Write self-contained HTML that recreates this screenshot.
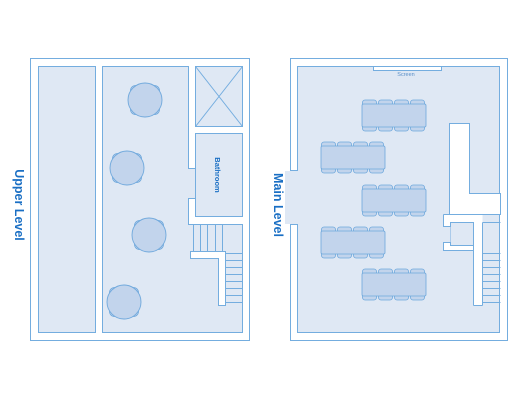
<!DOCTYPE html>
<html><head><meta charset="utf-8"><style>
html,body{margin:0;padding:0;background:#fff;width:520px;height:400px;overflow:hidden}
svg{display:block}
text{font-family:"Liberation Sans",sans-serif}
</style></head><body>
<svg width="520" height="400" viewBox="0 0 520 400" xmlns="http://www.w3.org/2000/svg">
<defs>
<g id="ltab">
  <g fill="#c2d4ec" stroke="#6fa8dc" stroke-width="0.8">
    <rect x="0.5" y="0" width="14" height="8" rx="2.5"/><rect x="16.5" y="0" width="14" height="8" rx="2.5"/><rect x="32.5" y="0" width="14" height="8" rx="2.5"/><rect x="48.5" y="0" width="14" height="8" rx="2.5"/>
    <rect x="0.5" y="23" width="14" height="8" rx="2.5"/><rect x="16.5" y="23" width="14" height="8" rx="2.5"/><rect x="32.5" y="23" width="14" height="8" rx="2.5"/><rect x="48.5" y="23" width="14" height="8" rx="2.5"/>
    <rect x="0" y="4" width="64" height="23" rx="1.5"/>
  </g>
</g>
<g id="rtab">
  <g fill="#c2d4ec" stroke="#6fa8dc" stroke-width="0.8">
    <rect x="-14.5" y="-14.5" width="29" height="29" rx="5"/>
  </g>
  <circle r="17" fill="#c2d4ec" stroke="#6fa8dc" stroke-width="0.9"/>
</g>
</defs>
<g stroke="#74addf" stroke-width="1" fill="#fff">
<!-- Upper level -->
<rect x="30.5" y="58.5" width="219" height="282"/>
<rect x="38.5" y="66.5" width="57" height="266" fill="#dfe8f4"/>
<polygon points="102.5,66.5 188.5,66.5 188.5,168.5 195.5,168.5 195.5,198.5 188.5,198.5 188.5,224.5 242.5,224.5 242.5,332.5 102.5,332.5" fill="#dfe8f4"/>
<rect x="195.5" y="66.5" width="47" height="60" fill="#dfe8f4"/>
<line x1="195.5" y1="66.5" x2="242.5" y2="126.5"/><line x1="242.5" y1="66.5" x2="195.5" y2="126.5"/>
<rect x="195.5" y="133.5" width="47" height="83" fill="#dfe8f4"/>
<polygon points="190.5,251.5 225.5,251.5 225.5,305.5 218.5,305.5 218.5,258.5 190.5,258.5"/>
<g fill="none">
<line x1="193.5" y1="224.5" x2="193.5" y2="251.5"/><line x1="200.5" y1="224.5" x2="200.5" y2="251.5"/><line x1="207.5" y1="224.5" x2="207.5" y2="251.5"/><line x1="215.5" y1="224.5" x2="215.5" y2="251.5"/><line x1="222.5" y1="224.5" x2="222.5" y2="251.5"/>
<line x1="225.5" y1="253.5" x2="242.5" y2="253.5"/><line x1="225.5" y1="260.5" x2="242.5" y2="260.5"/><line x1="225.5" y1="267.5" x2="242.5" y2="267.5"/><line x1="225.5" y1="274.5" x2="242.5" y2="274.5"/><line x1="225.5" y1="281.5" x2="242.5" y2="281.5"/><line x1="225.5" y1="288.5" x2="242.5" y2="288.5"/><line x1="225.5" y1="295.5" x2="242.5" y2="295.5"/><line x1="225.5" y1="302.5" x2="242.5" y2="302.5"/>
</g>
<!-- Main level -->
<rect x="290.5" y="58.5" width="217" height="282"/>
<rect x="297.5" y="66.5" width="202" height="266" fill="#dfe8f4"/>
<rect x="285" y="171" width="14" height="53" fill="#dfe8f4" stroke="none"/>
<line x1="290.5" y1="170.5" x2="297.5" y2="170.5"/><line x1="290.5" y1="224.5" x2="297.5" y2="224.5"/>
<rect x="373.5" y="66.5" width="68" height="4"/>
<polygon points="449.5,123.5 469.5,123.5 469.5,193.5 500.5,193.5 500.5,214.5 449.5,214.5"/>
<rect x="443.5" y="214.5" width="39" height="36" stroke="none"/>
<line x1="473.5" y1="222.5" x2="473.5" y2="305.5"/>
<line x1="482.5" y1="222.5" x2="482.5" y2="305.5"/>
<line x1="473.5" y1="305.5" x2="482.5" y2="305.5"/>
<rect x="474" y="250" width="8" height="55" stroke="none"/>
<line x1="443.5" y1="214.5" x2="500.5" y2="214.5"/>
<polyline points="482.5,222.5 500.5,222.5" fill="none"/>
<rect x="450.5" y="222.5" width="23" height="23" fill="#dfe8f4"/>
<rect x="440" y="226.5" width="10.5" height="16" fill="#dfe8f4" stroke="none"/>
<polyline points="443.5,214.5 443.5,226.5 450.5,226.5" fill="none"/>
<polyline points="450.5,242.5 443.5,242.5 443.5,250.5 473.5,250.5" fill="none"/>
<g fill="none">
<line x1="482.5" y1="253.5" x2="500.5" y2="253.5"/><line x1="482.5" y1="260.5" x2="500.5" y2="260.5"/><line x1="482.5" y1="267.5" x2="500.5" y2="267.5"/><line x1="482.5" y1="274.5" x2="500.5" y2="274.5"/><line x1="482.5" y1="281.5" x2="500.5" y2="281.5"/><line x1="482.5" y1="288.5" x2="500.5" y2="288.5"/><line x1="482.5" y1="295.5" x2="500.5" y2="295.5"/><line x1="482.5" y1="302.5" x2="500.5" y2="302.5"/>
</g>
</g>
<use href="#rtab" x="145" y="100"/>
<use href="#rtab" x="127" y="168"/>
<use href="#rtab" x="149" y="235"/>
<use href="#rtab" x="124" y="302"/>
<use href="#ltab" x="362" y="100"/>
<use href="#ltab" x="321" y="142"/>
<use href="#ltab" x="362" y="185"/>
<use href="#ltab" x="321" y="227"/>
<use href="#ltab" x="362" y="269"/>
<text x="406" y="76" font-size="5.5" fill="#5a8fc8" text-anchor="middle">Screen</text>
<text transform="translate(215,175) rotate(90)" font-size="7.5" font-weight="bold" fill="#1a6fc4" text-anchor="middle">Bathroom</text>
<text transform="translate(15,205) rotate(90)" font-size="12.5" font-weight="bold" fill="#1a6fc4" text-anchor="middle">Upper Level</text>
<text transform="translate(274,205) rotate(90)" font-size="12.5" font-weight="bold" fill="#1a6fc4" text-anchor="middle">Main Level</text>
</svg>
</body></html>
